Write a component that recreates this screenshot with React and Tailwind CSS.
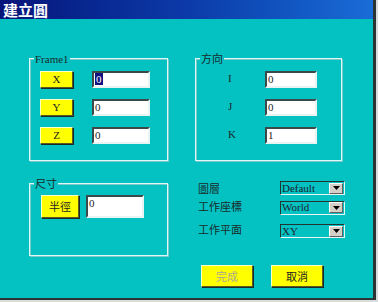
const serif = { fontFamily: '"Liberation Serif", "Noto Sans CJK TC", serif' };

const cjk = "font-['Noto_Sans_CJK_TC','Noto_Sans_CJK_SC',sans-serif]";
const roman = "font-['Liberation_Serif','Noto_Sans_CJK_TC',serif]";

function YellowButton({ children, className = "", muted = false }) {
  return (
    <div
      className={`flex items-center justify-center bg-[#ffff00] border border-t-[#ffffc8] border-l-[#ffffc8] border-b-[#5a5a20] border-r-[#5a5a20] shadow-[1px_1px_0_#1a2a2a] text-[11px] leading-none ${
        muted ? "text-[#a8a890]" : "text-[#222]"
      } ${className}`}
    >
      {children}
    </div>
  );
}

function Field({ value, selected = false, className = "" }) {
  return (
    <div
      className={`bg-white border-2 border-t-[#3a4a4a] border-l-[#3a4a4a] border-b-[#e8f4f4] border-r-[#e8f4f4] text-[11px] leading-[12px] text-[#222] pl-px ${roman} ${className}`}
    >
      {selected ? <span className="bg-[#101080] text-white px-px">{value}</span> : value}
    </div>
  );
}

function Group({ label, className = "", children }) {
  return (
    <div
      className={`relative border border-[#dcfafa] shadow-[inset_1px_1px_0_#7cc8c8,1px_1px_0_#7cc8c8] ${className}`}
    >
      <span className="absolute -top-[7px] left-[4px] px-px bg-[#04c2c2] text-[11px] leading-[13px] text-[#1a2a2a]">
        {label}
      </span>
      {children}
    </div>
  );
}

function Combo({ value, className = "" }) {
  return (
    <div
      className={`flex items-center justify-between w-[65px] h-[14px] border border-t-[#203434] border-l-[#203434] border-b-[#e8f6f6] border-r-[#e8f6f6] ${roman} text-[11px] leading-none text-[#1a2430] ${className}`}
    >
      <span className="pl-px">{value}</span>
      <span className="flex items-center justify-center w-[14px] h-[11px] mr-px bg-[#d4d0c8] border border-t-white border-l-white border-b-[#606060] border-r-[#606060]">
        <svg width="7" height="4" viewBox="0 0 7 4">
          <path d="M0 0h7L3.5 4z" fill="#000" />
        </svg>
      </span>
    </div>
  );
}

export default function App() {
  return (
    <div className="w-[378px] h-[302px] bg-[#d8dcdc]">
      <div className="flex flex-col w-[376px] h-[300px] bg-[#04c2c2] border-r-[3px] border-b-[2px] border-[#2a3434]">
        <div className="flex items-center h-[19px] pl-[3px] bg-gradient-to-r from-[#07147a] via-[#0c3aa8] to-[#1a6cd6]">
          <span className={`text-white text-[15px] leading-none font-bold ${cjk}`}>建立圓</span>
        </div>

        <div className={`flex flex-col pl-[29px] pt-[39px] ${cjk}`}>
          <div className="flex gap-[27px]">
            <Group label={<span style={serif}>Frame1</span>} className="w-[139px] h-[103px]">
              <div className="flex flex-col gap-[11px] pl-[10px] pt-[12px]">
                {["X", "Y", "Z"].map((axis, i) => (
                  <div key={axis} className="flex items-center gap-[19px]">
                    <YellowButton className={`w-[33px] h-[17px] ${roman}`}>{axis}</YellowButton>
                    <Field value="0" selected={i === 0} className="w-[58px] h-[17px]" />
                  </div>
                ))}
              </div>
            </Group>

            <Group label="方向" className="w-[147px] h-[103px]">
              <div className="flex flex-col gap-[11px] pl-[32px] pt-[12px]">
                {[
                  ["I", "0"],
                  ["J", "0"],
                  ["K", "1"],
                ].map(([axis, v]) => (
                  <div key={axis} className="flex items-start">
                    <span className={`w-[37px] pt-[2px] text-[11px] leading-none text-[#1a2a2a] ${roman}`}>{axis}</span>
                    <Field value={v} className="w-[52px] h-[17px]" />
                  </div>
                ))}
              </div>
            </Group>
          </div>

          <div className="flex mt-[20px]">
            <Group label="尺寸" className="w-[139px] h-[73px] mt-[2px]">
              <div className="flex items-center gap-[7px] pl-[11px] pt-[11px]">
                <YellowButton className="w-[38px] h-[23px]">半徑</YellowButton>
                <Field value="0" className="w-[58px] h-[23px]" />
              </div>
            </Group>

            <div className="flex flex-col ml-[30px]">
              <div className="flex items-center h-[14px]">
                <span className="w-[82px] text-[11px] leading-none text-[#1a2a2a]">圖層</span>
                <Combo value="Default" />
              </div>
              <div className="flex items-center h-[13px] mt-[6px]">
                <span className="w-[82px] text-[11px] leading-none text-[#1a2a2a] -mt-[3px]">工作座標</span>
                <Combo value="World" />
              </div>
              <div className="flex items-center h-[14px] mt-[10px]">
                <span className="w-[82px] text-[11px] leading-none text-[#1a2a2a] -mt-[3px]">工作平面</span>
                <Combo value="XY" className="text-[#1a3a7a]" />
              </div>
              <div className="flex gap-[18px] ml-[3px] mt-[27px]">
                <YellowButton muted className="w-[52px] h-[22px]">完成</YellowButton>
                <YellowButton className="w-[52px] h-[22px]">取消</YellowButton>
              </div>
            </div>
          </div>
        </div>
      </div>
    </div>
  );
}
